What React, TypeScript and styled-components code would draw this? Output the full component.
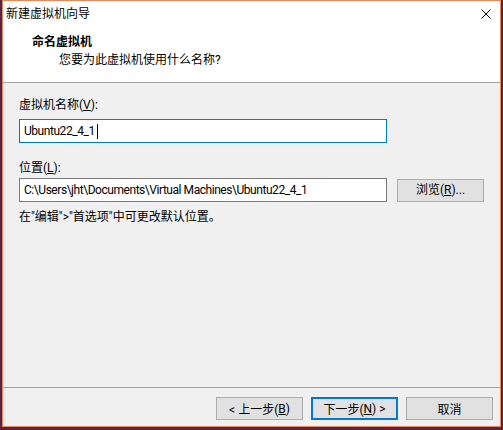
import React from "react";
import styled, { createGlobalStyle } from "styled-components";

const palette = {
  desktop: "#5c2246",
  frame: "#e58a5c",
  face: "#f0f0f0",
  white: "#ffffff",
  rule: "#a0a0a0",
  button: "#e1e1e1",
  buttonBorder: "#adadad",
  focus: "#0078d7",
  box: "#7a7a7a",
};

const GlobalStyle = createGlobalStyle`
  html, body {
    margin: 0;
    padding: 0;
    background: ${palette.desktop};
  }
  body {
    font-family: Roboto, "Noto Sans CJK SC", sans-serif;
    font-size: 12px;
    color: #000;
  }
`;

const Desktop = styled.div`
  width: 503px;
  height: 430px;
  box-sizing: border-box;
  padding: 0 2px 3px 2px;
  display: flex;
`;

const Window = styled.div`
  flex: 1;
  display: flex;
  flex-direction: column;
  border: 1px solid ${palette.frame};
  background: ${palette.face};
`;

// 상단 흰 영역 (타이틀 + 안내문)
const Header = styled.div`
  height: 82px;
  box-sizing: border-box;
  background: ${palette.white};
  border-bottom: 1px solid ${palette.rule};
`;

const TitleBar = styled.div`
  height: 25px;
  display: flex;
  align-items: center;
  justify-content: space-between;
  padding: 0 9px 0 3px;
  line-height: 18px;
`;

const CloseIcon = () => (
  <svg width="10" height="10" viewBox="0 0 10 10">
    <path d="M0.5 0.5 L9.5 9.5 M9.5 0.5 L0.5 9.5" stroke="#000" strokeWidth="1" fill="none" />
  </svg>
);

const Heading = styled.div`
  padding: 7px 0 0 29px;
  line-height: 18px;

  .heading-title {
    font-weight: bold;
  }
  .heading-sub {
    padding-left: 27px;
  }
`;

const Body = styled.div`
  flex: 1;
  padding: 13px 0 0 16px;
  line-height: 18px;
`;

const Label = styled.div<{ $gap: number; $top?: number }>`
  height: 18px;
  margin-top: ${(p) => p.$top ?? 0}px;
  margin-bottom: ${(p) => p.$gap}px;
`;

const Row = styled.div`
  display: flex;
  align-items: center;
  gap: 10px;
`;

const TextBox = styled.div<{ $focused?: boolean }>`
  width: 368px;
  height: 24px;
  box-sizing: border-box;
  display: flex;
  align-items: center;
  padding-left: 4px;
  letter-spacing: -0.45px;
  background: ${palette.white};
  border: 1px solid ${(p) => (p.$focused ? palette.focus : palette.box)};
  white-space: nowrap;
  overflow: hidden;
`;

const Caret = styled.span`
  display: inline-block;
  width: 1px;
  height: 15px;
  background: #000;
  margin-left: 2px;
`;

const Button = styled.button<{ $default?: boolean }>`
  width: 87px;
  height: 23px;
  box-sizing: border-box;
  padding: 0;
  font: inherit;
  font-size: 12px;
  color: #000;
  background: ${palette.button};
  border: ${(p) => (p.$default ? `2px solid ${palette.focus}` : `1px solid ${palette.buttonBorder}`)};
  display: flex;
  align-items: center;
  justify-content: center;
`;

const Hint = styled.div`
  margin-top: 6px;
`;

const Footer = styled.div`
  height: 39px;
  box-sizing: border-box;
  border-top: 1px solid ${palette.rule};
  display: flex;
  justify-content: flex-end;
  gap: 8px;
  padding: 9px 7px 0 0;
`;

const App: React.FC = () => {
  return (
    <>
      <GlobalStyle />
      <Desktop>
        <Window>
          <Header>
            <TitleBar>
              <span>新建虚拟机向导</span>
              <CloseIcon />
            </TitleBar>
            <Heading>
              <div className="heading-title">命名虚拟机</div>
              <div className="heading-sub">您要为此虚拟机使用什么名称?</div>
            </Heading>
          </Header>

          <Body>
            <Label $gap={5}>
              虚拟机名称(<u>V</u>):
            </Label>
            <TextBox $focused>
              Ubuntu22_4_1
              <Caret />
            </TextBox>

            <Label $gap={1} $top={16}>
              位置(<u>L</u>):
            </Label>
            <Row>
              <TextBox>C:\Users\jht\Documents\Virtual Machines\Ubuntu22_4_1</TextBox>
              <Button type="button">
                浏览(<u>R</u>)...
              </Button>
            </Row>
            <Hint>在"编辑"&gt;"首选项"中可更改默认位置。</Hint>
          </Body>

          <Footer>
            <Button type="button">
              &lt; 上一步(<u>B</u>)
            </Button>
            <Button type="button" $default>
              下一步(<u>N</u>) &gt;
            </Button>
            <Button type="button">取消</Button>
          </Footer>
        </Window>
      </Desktop>
    </>
  );
};

export default App;
